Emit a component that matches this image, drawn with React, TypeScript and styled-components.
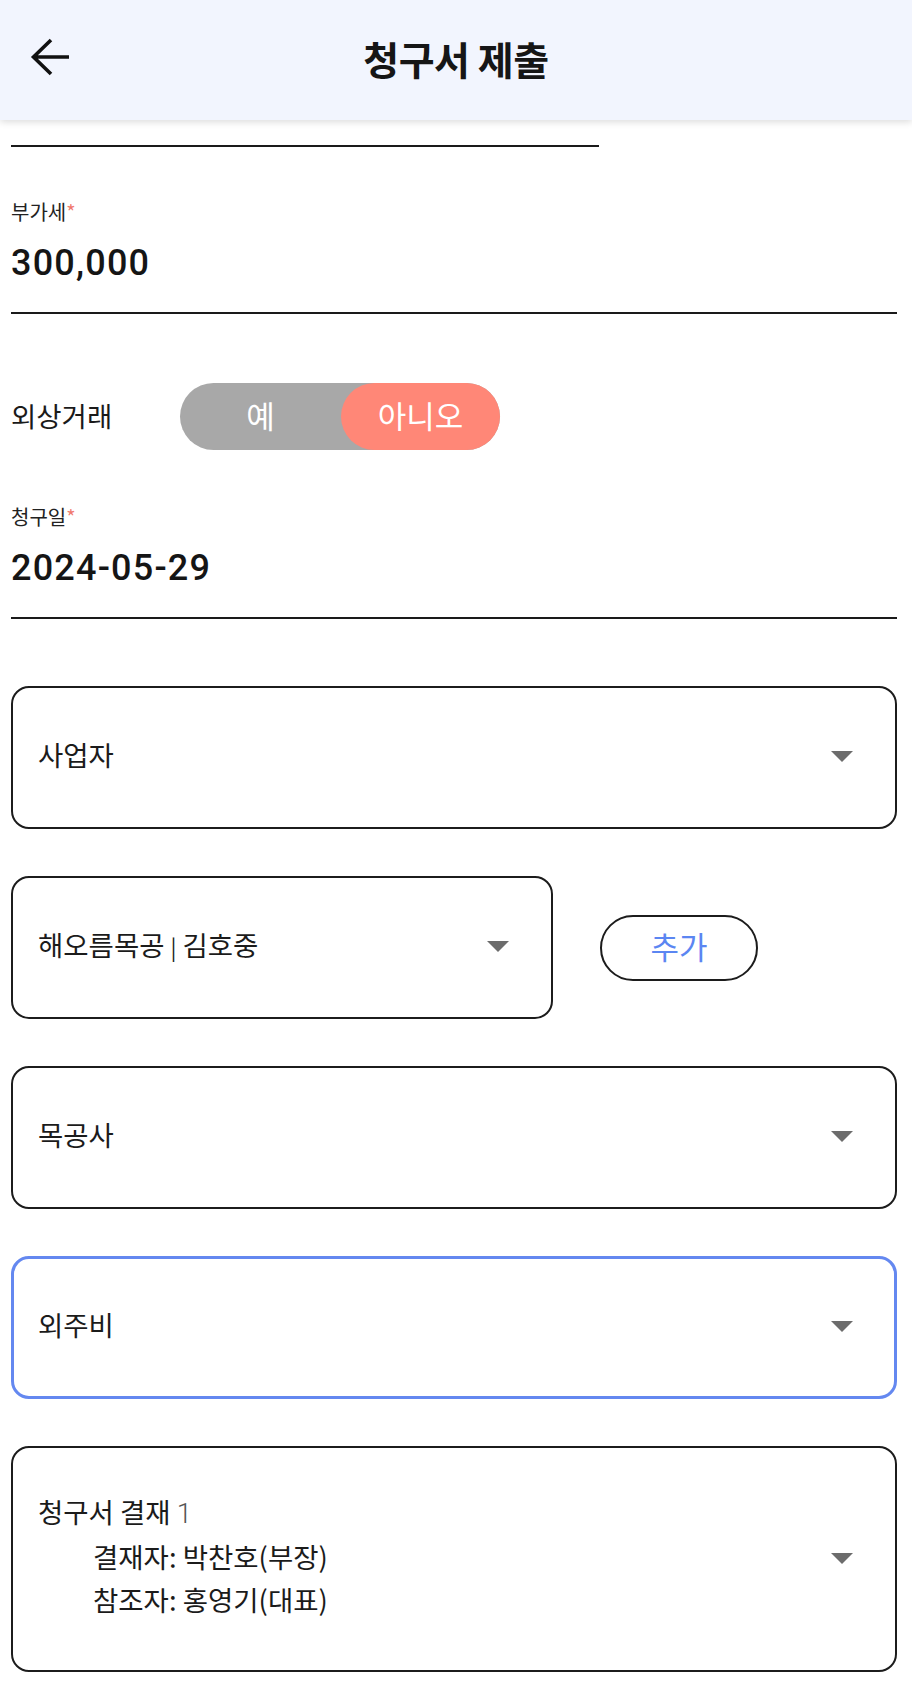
import styled, { createGlobalStyle } from "styled-components"

const GlobalStyle = createGlobalStyle`
  html, body {
    margin: 0;
    padding: 0;
    background: #ffffff;
  }

  body {
    font-family: "Noto Sans CJK KR", "Noto Sans", sans-serif;
    color: #1a1a1a;
  }

  * {
    box-sizing: border-box;
  }
`

const Page = styled.div`
  width: 912px;
  min-height: 1692px;
  background: #ffffff;
`

const Header = styled.header`
  position: relative;
  z-index: 1;
  display: grid;
  grid-template-columns: 1fr auto 1fr;
  align-items: center;
  height: 120px;
  background: #f2f5fe;
  box-shadow: 0 2px 7px rgba(0, 0, 0, 0.14);
`

const BackButton = styled.button`
  justify-self: start;
  display: flex;
  align-items: center;
  justify-content: center;
  width: 40px;
  height: 40px;
  margin-left: 30px;
  margin-top: -6px;
  padding: 0;
  border: 0;
  background: transparent;
  cursor: pointer;
`

const Title = styled.h1`
  margin: 0;
  margin-top: -4px;
  font-family: "Noto Sans CJK KR", sans-serif;
  font-size: 39px;
  font-weight: 700;
  letter-spacing: -0.5px;
  color: #161616;
`

const Content = styled.main`
  display: flex;
  flex-direction: column;
  padding: 0 15px 0 11px;
`

const CutLine = styled.div`
  width: 588px;
  height: 2px;
  margin-top: 25px;
  background: #1a1a1a;
`

const Field = styled.div<{ $top: number }>`
  display: flex;
  flex-direction: column;
  margin-top: ${(p) => p.$top}px;
  padding-bottom: 27px;
  border-bottom: 2px solid #1a1a1a;
`

const FieldLabel = styled.label`
  font-size: 20px;
  line-height: 22px;
  color: #222222;
`

const Required = styled.span`
  color: #f07a6e;
`

const FieldValue = styled.div`
  margin-top: 18px;
  font-family: Roboto, "Noto Sans", sans-serif;
  font-size: 36px;
  font-weight: 500;
  line-height: 44px;
  letter-spacing: 1.2px;
  color: #151515;
`

const ToggleRow = styled.div`
  display: flex;
  align-items: center;
  margin-top: 69px;
  margin-bottom: 56px;
`

const ToggleLabel = styled.span`
  width: 169px;
  padding-bottom: 4px;
  font-size: 27.5px;
  color: #1a1a1a;
`

const Toggle = styled.div`
  display: flex;
  width: 320px;
  height: 67px;
  border-radius: 34px;
  background: #a8a8a8;
`

const ToggleOption = styled.button<{ $active?: boolean }>`
  flex: ${(p) => (p.$active ? "0 0 159px" : "1")};
  display: flex;
  align-items: center;
  justify-content: center;
  padding: 0 0 4px;
  border: 0;
  border-radius: 34px;
  background: ${(p) => (p.$active ? "#ff8777" : "transparent")};
  font-family: "Noto Sans CJK KR", sans-serif;
  font-size: 31px;
  color: #ffffff;
  cursor: pointer;
`

const SelectRow = styled.div<{ $top: number }>`
  display: flex;
  align-items: center;
  gap: 47px;
  margin-top: ${(p) => p.$top}px;
`

const SelectBox = styled.div<{ $width?: number; $height?: number; $focused?: boolean }>`
  display: flex;
  align-items: center;
  justify-content: space-between;
  width: ${(p) => (p.$width ? `${p.$width}px` : "100%")};
  height: ${(p) => p.$height ?? 143}px;
  padding: 0 ${(p) => (p.$focused ? 41 : 42)}px 0 ${(p) => (p.$focused ? 24 : 25)}px;
  border: ${(p) => (p.$focused ? "3px solid #6488f0" : "2px solid #1c1c1c")};
  border-radius: 18px;
  background: #ffffff;
`

const SelectText = styled.span`
  padding-bottom: 8px;
  font-size: 27.5px;
  color: #1b1b1b;
`

const Divider = styled.span`
  font-size: 22px;
  margin: 0 6px;
`

const Caret = styled.span`
  width: 0;
  height: 0;
  margin-bottom: 2px;
  border-left: 11px solid transparent;
  border-right: 11px solid transparent;
  border-top: 11px solid #6c6c6c;
`

const AddButton = styled.button`
  width: 158px;
  height: 66px;
  padding: 0 0 4px;
  border: 2px solid #1c1c1c;
  border-radius: 33px;
  background: #ffffff;
  font-family: "Noto Sans CJK KR", sans-serif;
  font-size: 31px;
  color: #5b86f2;
  cursor: pointer;
`

const ApprovalText = styled.div`
  display: flex;
  flex-direction: column;
  padding-bottom: 8px;
  font-size: 27.5px;
  line-height: 43px;
  color: #1b1b1b;
`

const ApprovalCount = styled.span`
  font-family: Roboto, sans-serif;
  font-weight: 300;
  color: #555555;
`

const ApprovalLine = styled.span`
  padding-left: 55px;
`

function BackArrow(): JSX.Element {
  return (
    <svg width="40" height="40" viewBox="0 0 40 40" fill="none">
      <path
        d="M3 20H39M21 3L3.5 20L21 37"
        stroke="#111111"
        strokeWidth="3.6"
        strokeLinejoin="miter"
      />
    </svg>
  )
}

export default function App(): JSX.Element {
  return (
    <Page>
      <GlobalStyle />
      <Header>
        <BackButton aria-label="뒤로">
          <BackArrow />
        </BackButton>
        <Title>청구서 제출</Title>
        <span />
      </Header>

      <Content>
        <CutLine />

        <Field $top={54}>
          <FieldLabel>
            부가세<Required>*</Required>
          </FieldLabel>
          <FieldValue>300,000</FieldValue>
        </Field>

        <ToggleRow>
          <ToggleLabel>외상거래</ToggleLabel>
          <Toggle>
            <ToggleOption>예</ToggleOption>
            <ToggleOption $active>아니오</ToggleOption>
          </Toggle>
        </ToggleRow>

        <Field $top={0}>
          <FieldLabel>
            청구일<Required>*</Required>
          </FieldLabel>
          <FieldValue>2024-05-29</FieldValue>
        </Field>

        <SelectRow $top={67}>
          <SelectBox>
            <SelectText>사업자</SelectText>
            <Caret />
          </SelectBox>
        </SelectRow>

        <SelectRow $top={47}>
          <SelectBox $width={542}>
            <SelectText>
              해오름목공<Divider>|</Divider>김호중
            </SelectText>
            <Caret />
          </SelectBox>
          <AddButton>추가</AddButton>
        </SelectRow>

        <SelectRow $top={47}>
          <SelectBox>
            <SelectText>목공사</SelectText>
            <Caret />
          </SelectBox>
        </SelectRow>

        <SelectRow $top={47}>
          <SelectBox $focused>
            <SelectText>외주비</SelectText>
            <Caret />
          </SelectBox>
        </SelectRow>

        <SelectRow $top={47}>
          <SelectBox $height={226}>
            <ApprovalText>
              <span>
                청구서 결재 <ApprovalCount>1</ApprovalCount>
              </span>
              <ApprovalLine>결재자: 박찬호(부장)</ApprovalLine>
              <ApprovalLine>참조자: 홍영기(대표)</ApprovalLine>
            </ApprovalText>
            <Caret />
          </SelectBox>
        </SelectRow>
      </Content>
    </Page>
  )
}
